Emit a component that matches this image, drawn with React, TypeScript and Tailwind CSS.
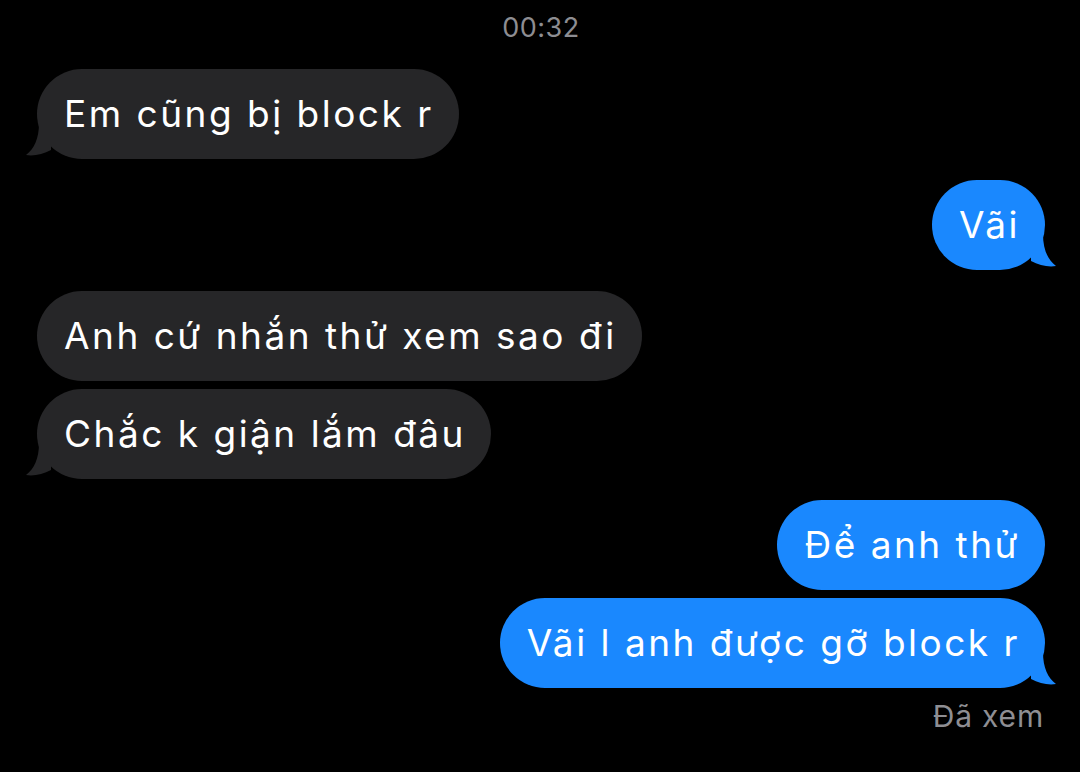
import React from "react"

type Msg = { text: string; me: boolean; tail: boolean; gap: number }

const messages: Msg[] = [
  { text: "Em cũng bị block r", me: false, tail: true, gap: 15 },
  { text: "Vãi", me: true, tail: true, gap: 21 },
  { text: "Anh cứ nhắn thử xem sao đi", me: false, tail: false, gap: 21 },
  { text: "Chắc k giận lắm đâu", me: false, tail: true, gap: 8 },
  { text: "Để anh thử", me: true, tail: false, gap: 21 },
  { text: "Vãi l anh được gỡ block r", me: true, tail: true, gap: 8 },
]

function Tail({ me }: { me: boolean }) {
  // bubble tail, drawn for the left side and mirrored for the right
  return (
    <svg
      width="26"
      height="36"
      viewBox="0 0 26 36"
      className={
        me
          ? "absolute bottom-0 right-[-11px] -scale-x-100"
          : "absolute bottom-0 left-[-11px]"
      }
    >
      <path
        d="M13 0 C13 16 8 26 0 32 C8 33.5 17 31 25 27 L25 0 Z"
        fill={me ? "#1a88fe" : "#262628"}
      />
    </svg>
  )
}

function Bubble({ m }: { m: Msg }) {
  return (
    <div className={m.me ? "flex justify-end" : "flex justify-start"}>
      <div
        className={
          "relative rounded-full pl-[27px] pr-[25px] h-[90px] flex items-center text-[37px] leading-[44px] tracking-[2.5px] text-white " +
          (m.me ? "bg-[#1a88fe]" : "bg-[#262628]")
        }
        style={{ marginTop: m.gap }}
      >
        {m.tail && <Tail me={m.me} />}
        <span className="relative">{m.text}</span>
      </div>
    </div>
  )
}

export default function App() {
  return (
    <div
      className="w-[1080px] h-[772px] bg-black overflow-hidden pl-[37px] pr-[35px]"
      style={{ fontFamily: "Inter, 'Noto Sans', sans-serif" }}
    >
      <div className="h-[54px] pt-[2px] flex items-center justify-center text-[27px] tracking-[0.5px] text-[#8d8d92]">
        00:32
      </div>
      {messages.map((m, i) => (
        <Bubble key={i} m={m} />
      ))}
      <div className="mt-[10px] h-[36px] flex items-center justify-end pr-[1px] text-[30px] tracking-[0.8px] text-[#8e8e93]">
        Đã xem
      </div>
    </div>
  )
}
